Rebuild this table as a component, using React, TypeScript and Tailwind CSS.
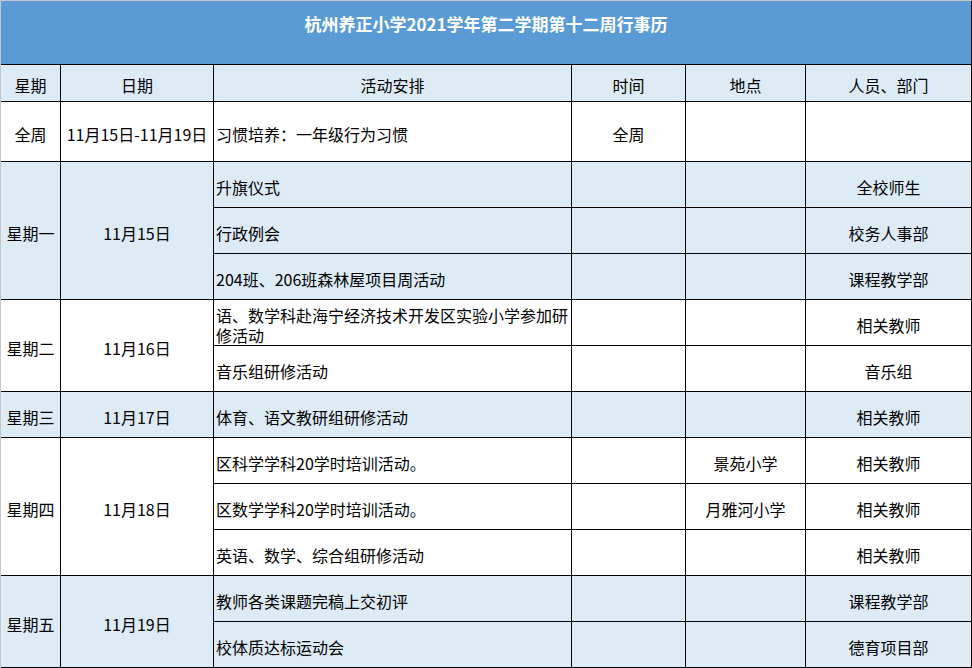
const LIGHT = "bg-[#ddebf7]";

type Cell = {
    text?: React.ReactNode;
    span?: 1 | 2 | 3;
    align?: "left" | "center";
};

type Group = {
    bg: string;
    day: string;
    date: string;
    rows: { activity: React.ReactNode; time?: string; place?: string; people?: string }[];
};

const groups: Group[] = [
    {
        bg: "bg-white",
        day: "全周",
        date: "11月15日-11月19日",
        rows: [{ activity: "习惯培养：一年级行为习惯", time: "全周" }],
    },
    {
        bg: LIGHT,
        day: "星期一",
        date: "11月15日",
        rows: [
            { activity: "升旗仪式", people: "全校师生" },
            { activity: "行政例会", people: "校务人事部" },
            { activity: "204班、206班森林屋项目周活动", people: "课程教学部" },
        ],
    },
    {
        bg: "bg-white",
        day: "星期二",
        date: "11月16日",
        rows: [
            {
                activity: (
                    <>
                        语、数学科赴海宁经济技术开发区实验小学参加研
                        <br />
                        修活动
                    </>
                ),
                people: "相关教师",
            },
            { activity: "音乐组研修活动", people: "音乐组" },
        ],
    },
    {
        bg: LIGHT,
        day: "星期三",
        date: "11月17日",
        rows: [{ activity: "体育、语文教研组研修活动", people: "相关教师" }],
    },
    {
        bg: "bg-white",
        day: "星期四",
        date: "11月18日",
        rows: [
            { activity: "区科学学科20学时培训活动。", place: "景苑小学", people: "相关教师" },
            { activity: "区数学学科20学时培训活动。", place: "月雅河小学", people: "相关教师" },
            { activity: "英语、数学、综合组研修活动", people: "相关教师" },
        ],
    },
    {
        bg: LIGHT,
        day: "星期五",
        date: "11月19日",
        rows: [
            { activity: "教师各类课题完稿上交初评", people: "课程教学部" },
            { activity: "校体质达标运动会", people: "德育项目部" },
        ],
    },
];

const spanClass: Record<number, string> = {
    1: "row-span-1",
    2: "row-span-2",
    3: "row-span-3",
};

const Td = ({ bg, text, span = 1, align = "center" }: Cell & { bg: string }) => (
    <div
        className={`${bg} ${spanClass[span]} border-r border-b border-black flex items-center pt-[4px] leading-[20px] ${
            align === "left" ? "justify-start pl-[2px]" : "justify-center text-center"
        }`}
    >
        {text && <span>{text}</span>}
    </div>
);

const App = () => {
    return (
        <div
            className="w-[972px] h-[668px] overflow-hidden bg-white border-l border-t border-[#c6c6c6] text-black text-[16px]"
            style={{ fontFamily: '"Noto Sans CJK SC", "Noto Sans", sans-serif' }}
        >
            {/* Title */}
            <div className="h-[64px] bg-[#5b9bd5] border-b border-r border-black text-white font-bold text-[17px] leading-[24px] text-center pt-[11px]">
                杭州养正小学2021学年第二学期第十二周行事历
            </div>

            <div className="grid grid-cols-[60px_153px_358px_114px_120px_166px] grid-rows-[37px_60px_repeat(11,46px)]">
                {["星期", "日期", "活动安排", "时间", "地点", "人员、部门"].map((h) => (
                    <Td key={h} bg={LIGHT} text={h} />
                ))}

                {groups.map((g) =>
                    g.rows.map((r, i) => (
                        <div key={g.day + i} className="contents">
                            {i === 0 && (
                                <>
                                    <Td bg={g.bg} text={g.day} span={g.rows.length as 1 | 2 | 3} />
                                    <Td bg={g.bg} text={g.date} span={g.rows.length as 1 | 2 | 3} />
                                </>
                            )}
                            <Td bg={g.bg} text={r.activity} align="left" />
                            <Td bg={g.bg} text={r.time} />
                            <Td bg={g.bg} text={r.place} />
                            <Td bg={g.bg} text={r.people} />
                        </div>
                    ))
                )}
            </div>
        </div>
    );
};

export default App;
